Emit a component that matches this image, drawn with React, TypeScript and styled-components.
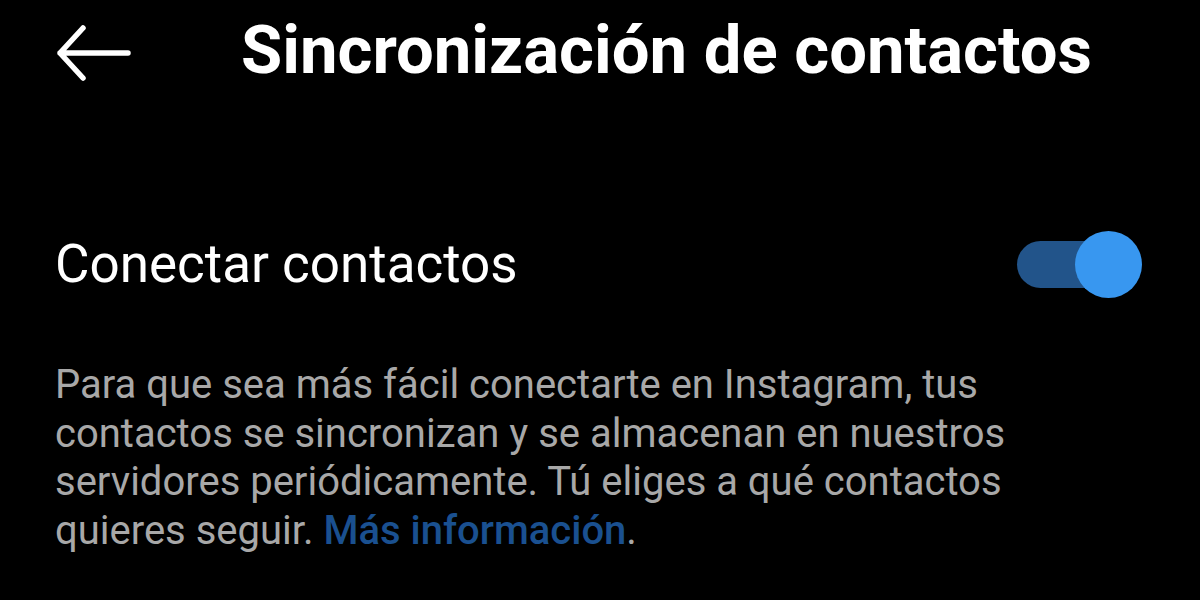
import styled, { createGlobalStyle } from 'styled-components';

const GlobalStyle = createGlobalStyle`
  html, body {
    margin: 0;
    padding: 0;
    background: #000;
  }
  body {
    font-family: Roboto, 'Noto Sans', sans-serif;
    color: #fff;
  }
`;

const Screen = styled.div`
  width: 1200px;
  height: 600px;
  background: #000;
  overflow: hidden;
`;

const Header = styled.header`
  display: flex;
  align-items: center;
  height: 100px;
  padding: 0 0 0 55px;
  gap: 110px;
`;

const BackButton = styled.button`
  display: flex;
  align-items: center;
  justify-content: center;
  background: none;
  border: 0;
  padding: 0;
  margin-top: 6px;
  width: 76px;
  height: 60px;
  color: #fff;
  cursor: pointer;
`;

const Title = styled.h1`
  margin: 0;
  font-size: 67px;
  font-weight: 700;
  letter-spacing: 0;
`;

const Section = styled.section`
  padding: 0 58px 0 55px;
`;

const SettingRow = styled.div`
  display: flex;
  align-items: center;
  justify-content: space-between;
  margin-top: 124px;
  height: 80px;
`;

const SettingLabel = styled.span`
  font-size: 53px;
  font-weight: 400;
`;

const Toggle = styled.div`
  position: relative;
  width: 125px;
  height: 67px;
  flex-shrink: 0;
`;

const Track = styled.div<{ on: boolean }>`
  position: absolute;
  left: 0;
  top: 10px;
  width: 104px;
  height: 47px;
  border-radius: 24px;
  background: ${({ on }) => (on ? '#22548a' : '#555')};
`;

const Knob = styled.div<{ on: boolean }>`
  position: absolute;
  top: 0;
  left: ${({ on }) => (on ? '58px' : '0')};
  width: 67px;
  height: 67px;
  border-radius: 50%;
  background: ${({ on }) => (on ? '#3897f0' : '#ddd')};
`;

const Description = styled.p`
  margin: 57px 0 0;
  font-size: 40px;
  line-height: 48.6px;
  color: #a8a8a8;
  max-width: 1020px;
`;

const Link = styled.a`
  color: #1a5090;
  font-weight: 500;
  text-decoration: none;
`;

function BackArrow() {
  return (
    <svg width="76" height="60" viewBox="0 0 76 60" fill="none">
      <path
        d="M73 30H5M28 5L5 30l23 25"
        stroke="currentColor"
        strokeWidth="5.5"
        strokeLinecap="round"
        strokeLinejoin="round"
      />
    </svg>
  );
}

export default function App() {
  const connected = true;

  return (
    <Screen>
      <GlobalStyle />
      <Header>
        <BackButton aria-label="Atrás">
          <BackArrow />
        </BackButton>
        <Title>Sincronización de contactos</Title>
      </Header>
      <Section>
        <SettingRow>
          <SettingLabel>Conectar contactos</SettingLabel>
          <Toggle>
            <Track on={connected} />
            <Knob on={connected} />
          </Toggle>
        </SettingRow>
        <Description>
          Para que sea más fácil conectarte en Instagram, tus contactos se
          sincronizan y se almacenan en nuestros servidores periódicamente. Tú
          eliges a qué contactos quieres seguir.{' '}
          <Link href="#">Más información</Link>.
        </Description>
      </Section>
    </Screen>
  );
}
